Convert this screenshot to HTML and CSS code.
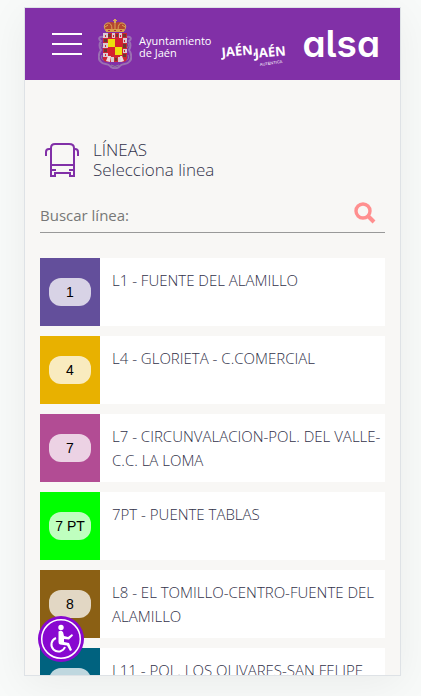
FILE: index.html
```html
<!DOCTYPE html>
<html lang="es">
<head>
  <meta charset="UTF-8">
  <meta name="viewport" content="width=device-width, initial-scale=1">
  <title>Líneas</title>
  <link rel="stylesheet" href="styles.css">
</head>
<body>
  <div class="app">
    <header class="topbar">
      <button type="button" class="menu-btn" aria-label="Menú">
        <span></span>
        <span></span>
        <span></span>
      </button>

      <svg class="crest" viewBox="0 0 34 50" aria-hidden="true">
        <path d="M5 18C1 17 0 20 3 22C0 26 2 29 3 31C0 35 0 41 3 43C5 46 10 44 12 47C14 50 20 50 22 47C24 44 29 46 31 43C34 41 34 35 31 31C32 29 34 26 31 22C34 20 33 17 29 18" fill="none" stroke="#9a70b2" stroke-width="2"/>
        <path d="M4 24q-2 3 1 5M30 24q2 3-1 5M4 36q-2 4 2 5M30 36q2 4-2 5M13 46q4 3 8 0" fill="none" stroke="#8e7f9b" stroke-width="1"/>
        <path d="M5 14H29V39Q29 43 24 43H10Q5 43 5 39Z" fill="#cf2434"/>
        <path d="M5 14h5v5H5zM14 14h3v5h-3zM21 14h3v5h-3zM5 24h5v5H5zM25 19h4v5h-4zM5 34h5v4H5zM25 30h4v4h-4zM13 38h3v5h-3zM20 38h3v5h-3z" fill="#d9cbd0"/>
        <path d="M10 15h3v3h-3zM18 15h2v3h-2zM25 15h3v3h-3zM6 20h3v3H6zM6 30h3v3H6zM25 25h3v4h-3zM25 35h3v3h-3zM17 39h2v3h-2z" fill="#6b3a2e"/>
        <path d="M7 16h1v2H7zM15 16h1v2h-1zM22 16h1v2h-1zM7 26h1v2H7zM26 21h1v2h-1zM7 35h1v2H7zM26 31h1v2h-1z" fill="#cf2434"/>
        <path d="M10 20H24V36H10Z" fill="#d6202e"/>
        <path d="M10 20h7v8h-7zM17 28h7v8h-7z" fill="#ecdf0c"/>
        <path d="M8 42l2-5h3l-1 6zM26 42l-2-5h-2l1 6z" fill="#eadde0"/>
        <path d="M8 12Q4 6 9 4Q13 2 17 4Q21 2 25 4Q30 6 26 12Z" fill="#b5452f"/>
        <path d="M8 12Q4 6 9 4Q14 3 14 11M26 12Q30 6 25 4Q20 3 20 11M17 4V11M7 8l3-2M27 8l-3-2" fill="none" stroke="#d9a857" stroke-width="1"/>
        <path d="M8 10h18v3H8z" fill="#d9a04c"/>
        <path d="M10 11h2v1h-2zM16 11h2v1h-2zM22 11h2v1h-2z" fill="#b52c38"/>
        <path d="M16 0h2v1h1v1h-1v2h-2V2h-1V1h1z" fill="#d9a857"/>
      </svg>

      <p class="council">Ayuntamiento<br>de Jaén</p>

      <svg class="jaen-logo" viewBox="0 0 66 32" role="img" aria-label="Jaén, Jaén auténtica">
        <g fill="#fff" class="jaen-name">
          <text x="1" y="21" transform="rotate(-5 1 21)">JAÉN,</text>
          <text x="34" y="22" transform="rotate(-5 34 22)">JAÉN</text>
        </g>
        <text class="jaen-sub" x="39" y="30" transform="rotate(-8 39 30)" fill="#fff">AUTÉNTICA</text>
      </svg>

      <span class="alsa">alsa</span>
    </header>

    <main class="content">
      <div class="heading">
        <svg class="bus" viewBox="0 0 34 34" aria-hidden="true">
          <g fill="none" stroke="#8130a7" stroke-width="2">
            <path d="M6 33V5Q6 1 10 1H24Q29 1 29 5V33"/>
            <path d="M6 6H4Q1 6 1 9V13M29 6H30Q33 6 33 9V13"/>
            <path d="M6 22H29" stroke-width="2"/>
            <path d="M6 27H11M29 27H24" stroke-width="2"/>
            <path d="M5 33H10V30H25V33H30"/>
          </g>
        </svg>
        <h1 class="title">LÍNEAS<br>Selecciona linea</h1>
      </div>

      <form class="search">
        <input type="text" class="search-input" placeholder="Buscar línea:" aria-label="Buscar línea">
        <button type="button" class="search-btn" aria-label="Buscar">
          <svg viewBox="0 0 22 22" aria-hidden="true">
            <circle cx="9" cy="9" r="7" fill="none" stroke="#ff8f8f" stroke-width="3.4"/>
            <path d="M14 14L20 20" stroke="#ff8f8f" stroke-width="4"/>
          </svg>
        </button>
      </form>

      <ul class="lines">
        <li>
          <a href="#" class="line">
            <span class="line-color violet"><span class="badge">1</span></span>
            <span class="line-name">L1 - FUENTE DEL ALAMILLO</span>
          </a>
        </li>
        <li>
          <a href="#" class="line">
            <span class="line-color yellow"><span class="badge">4</span></span>
            <span class="line-name">L4 - GLORIETA - C.COMERCIAL</span>
          </a>
        </li>
        <li>
          <a href="#" class="line">
            <span class="line-color pink"><span class="badge">7</span></span>
            <span class="line-name">L7 - CIRCUNVALACION-POL. DEL VALLE-C.C. LA LOMA</span>
          </a>
        </li>
        <li>
          <a href="#" class="line">
            <span class="line-color green"><span class="badge">7 PT</span></span>
            <span class="line-name">7PT - PUENTE TABLAS</span>
          </a>
        </li>
        <li>
          <a href="#" class="line">
            <span class="line-color brown"><span class="badge">8</span></span>
            <span class="line-name">L8 - EL TOMILLO-CENTRO-FUENTE DEL ALAMILLO</span>
          </a>
        </li>
        <li>
          <a href="#" class="line">
            <span class="line-color teal"><span class="badge">11</span></span>
            <span class="line-name">L11 - POL. LOS OLIVARES-SAN FELIPE</span>
          </a>
        </li>
      </ul>
    </main>

    <button type="button" class="access-btn" aria-label="Accesibilidad">
      <svg viewBox="0 0 46 46" aria-hidden="true">
        <circle cx="23" cy="23" r="23" fill="#8808d0"/>
        <circle cx="23" cy="23" r="19.3" fill="none" stroke="#fff" stroke-width="1.5"/>
        <circle cx="23" cy="11.500" r="2.700" fill="#fff"/>
        <path d="M20.500 15.500Q23 14 25 16L26 20L30 21L34 18L35 19.500L31 23.500L26 23V26L31 27L34 34L32 35L29 29.500L22 28.500Q20.500 28 20.500 26Z" fill="#fff"/>
        <path d="M18 22A7 7 0 1 0 27 31" fill="none" stroke="#fff" stroke-width="2"/>
      </svg>
    </button>
  </div>
</body>
</html>
```

FILE: styles.css
```css
* {
  margin: 0;
  padding: 0;
  box-sizing: border-box;
}

:root {
  --purple: #8130a7;
  --bg: #f8f7f5;
  --text: #32324a;
}

body {
  height: 100vh;
  padding: 7px 20px 20px 24px;
  background: #f8faf9;
  font-family: 'Open Sans', 'Noto Sans', sans-serif;
  color: var(--text);
  overflow: hidden;
}

button {
  background: none;
  border: none;
  cursor: pointer;
}

.app {
  position: relative;
  height: 100%;
  background: var(--bg);
  border: 1px solid #dee2e6;
  box-shadow: 0 8px 40px rgba(0, 0, 0, 0.06);
  overflow: hidden;
}

/* header */
.topbar {
  display: flex;
  align-items: center;
  height: 72px;
  padding: 0 20px 0 27px;
  background: var(--purple);
  color: #fff;
}

.menu-btn {
  display: flex;
  flex-direction: column;
  gap: 8px;
  width: 30px;
  margin-right: 16px;
}

.menu-btn span {
  height: 2px;
  background: #fff;
}

.crest {
  width: 34px;
  height: 50px;
  margin-right: 7px;
}

.council {
  width: 82px;
  padding-top: 6px;
  font-size: 11px;
  line-height: 12px;
  white-space: nowrap;
}

.jaen-logo {
  width: 66px;
  height: 32px;
  margin-top: 16px;
}

.jaen-name {
  font-size: 13px;
  font-weight: bold;
}

.jaen-sub {
  font-family: 'Liberation Sans', sans-serif;
  font-size: 4px;
}

.alsa {
  margin-left: auto;
  font-family: Inter, sans-serif;
  font-size: 37px;
  font-weight: 600;
  font-feature-settings: 'cv05', 'cv11';
  line-height: 40px;
}

/* content */
.content {
  padding: 60px 15px 0;
}

.heading {
  display: flex;
  align-items: center;
  gap: 14px;
  padding-left: 5px;
}

.bus {
  width: 34px;
  height: 34px;
}

.title {
  font-size: 17px;
  font-weight: 300;
  line-height: 20px;
}

.search {
  display: flex;
  align-items: center;
  height: 45px;
  margin: 8px 0 25px;
  padding: 6px 9px 0 0;
  border-bottom: 1px solid #999;
}

.search-input {
  flex: 1;
  min-width: 0;
  height: 30px;
  padding-top: 4px;
  border: none;
  outline: none;
  background: transparent;
  font-family: inherit;
  font-size: 15px;
  color: var(--text);
}

.search-input::placeholder {
  color: #777;
  opacity: 1;
}

.search-btn,
.search-btn svg {
  display: block;
  width: 22px;
  height: 22px;
}

/* bus lines */
.lines {
  display: flex;
  flex-direction: column;
  gap: 10px;
  list-style: none;
}

.line {
  display: flex;
  min-height: 68px;
  background: #fff;
  color: inherit;
  text-decoration: none;
}

.line-color {
  display: flex;
  flex-shrink: 0;
  align-items: center;
  justify-content: center;
  width: 60px;
}

.badge {
  width: 42px;
  border-radius: 12px;
  background: rgba(255, 255, 255, 0.75);
  color: #000;
  font-family: 'Liberation Sans', sans-serif;
  font-size: 14px;
  line-height: 28px;
  text-align: center;
}

.line-name {
  padding: 10px 0 10px 12px;
  font-size: 15px;
  font-weight: 300;
  line-height: 24px;
}

.violet { background: #634f9b; }
.yellow { background: #e8b100; }
.pink { background: #b24c94; }
.green { background: #00ff00; }
.brown { background: #8b6014; }
.teal { background: #00627f; }

.access-btn {
  position: absolute;
  left: 13px;
  bottom: 13px;
  width: 46px;
  height: 46px;
}

.access-btn svg {
  display: block;
}
```
